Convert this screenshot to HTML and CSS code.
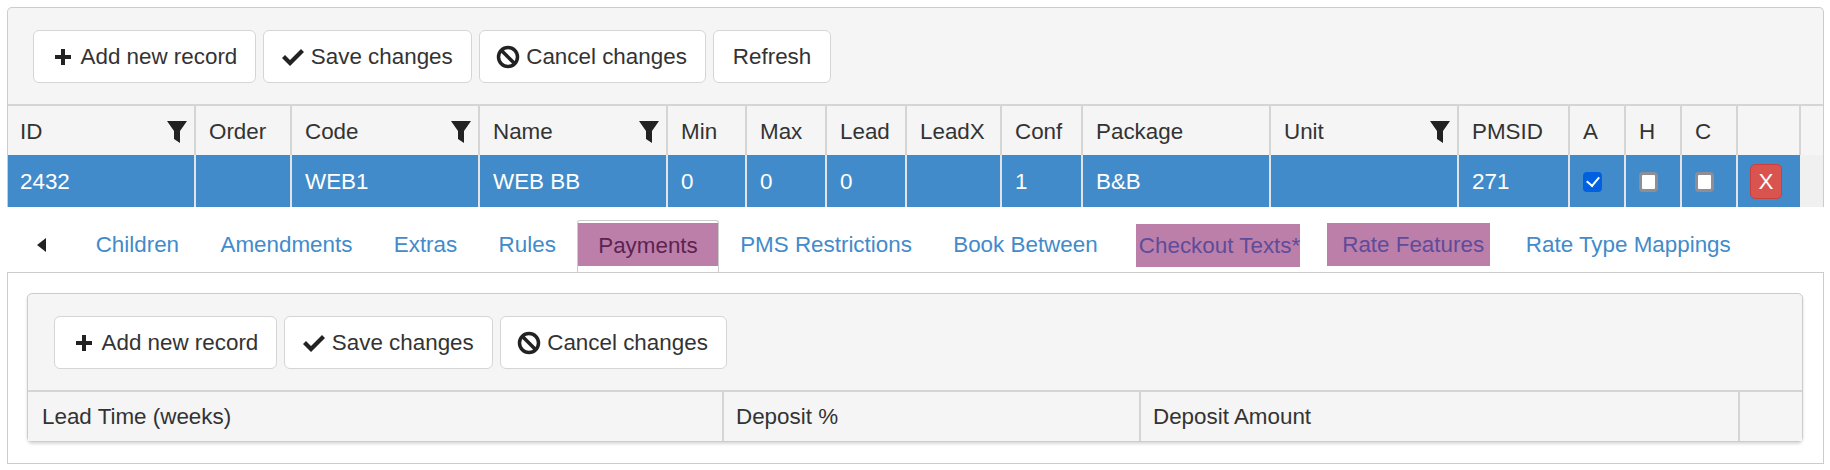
FILE: index.html
```html
<!DOCTYPE html>
<html lang="en">
<head>
  <meta charset="UTF-8" />
  <title>Rate Types</title>
  <link rel="stylesheet" href="styles.css">
</head>
<body>
  <div class="grid grid-main">
    <div class="toolbar">
      <button class="btn" type="button"><svg class="icon" viewBox="0 0 24 24"><path d="M10 4h4v6h6v4h-6v6h-4v-6H4v-4h6z"/></svg>Add new record</button>
      <button class="btn" type="button"><svg class="icon" viewBox="0 0 24 24"><path d="M1 13l3-3 5 5L20 4l3 3L9 21z"/></svg>Save changes</button>
      <button class="btn" type="button"><svg class="icon" viewBox="0 0 24 24"><circle class="ring" cx="12" cy="12" r="9.500"/><path class="slash" d="M5.500 5.500l13 13"/></svg>Cancel changes</button>
      <button class="btn btn-plain" type="button">Refresh</button>
    </div>
    <table class="rows">
      <colgroup>
        <col class="c-187"><col class="c-96"><col class="c-188"><col class="c-188">
        <col class="c-79"><col class="c-80"><col class="c-80"><col class="c-95"><col class="c-81">
        <col class="c-188"><col class="c-188"><col class="c-111"><col class="c-56"><col class="c-56"><col class="c-56"><col class="c-63"><col>
      </colgroup>
      <thead>
        <tr>
          <th class="has-filter">ID<svg class="funnel" viewBox="0 0 20 22"><path d="M0 0h20L13 10v12l-6-4V10z"/></svg></th>
          <th>Order</th>
          <th class="has-filter">Code<svg class="funnel" viewBox="0 0 20 22"><path d="M0 0h20L13 10v12l-6-4V10z"/></svg></th>
          <th class="has-filter">Name<svg class="funnel" viewBox="0 0 20 22"><path d="M0 0h20L13 10v12l-6-4V10z"/></svg></th>
          <th>Min</th>
          <th>Max</th>
          <th>Lead</th>
          <th>LeadX</th>
          <th>Conf</th>
          <th>Package</th>
          <th class="has-filter">Unit<svg class="funnel" viewBox="0 0 20 22"><path d="M0 0h20L13 10v12l-6-4V10z"/></svg></th>
          <th>PMSID</th>
          <th>A</th>
          <th>H</th>
          <th>C</th>
          <th></th>
          <th class="gutter"></th>
        </tr>
      </thead>
      <tbody>
        <tr class="selected">
          <td>2432</td>
          <td></td>
          <td>WEB1</td>
          <td>WEB BB</td>
          <td>0</td>
          <td>0</td>
          <td>0</td>
          <td></td>
          <td>1</td>
          <td>B&amp;B</td>
          <td></td>
          <td>271</td>
          <td><input type="checkbox" checked /></td>
          <td><input type="checkbox" /></td>
          <td><input type="checkbox" /></td>
          <td><button class="btn-delete" type="button">X</button></td>
          <td class="gutter"></td>
        </tr>
      </tbody>
    </table>
  </div>

  <div class="tabstrip">
    <ul class="tabs">
      <li class="tab-prev"><svg class="arrow" viewBox="0 0 10 14"><path d="M9 0v14L0 7z"/></svg></li>
      <li class="tab"><a href="#">Children</a></li>
      <li class="tab"><a href="#">Amendments</a></li>
      <li class="tab"><a href="#">Extras</a></li>
      <li class="tab"><a href="#">Rules</a></li>
      <li class="tab active"><a href="#">Payments</a></li>
      <li class="tab"><a href="#">PMS Restrictions</a></li>
      <li class="tab"><a href="#">Book Between</a></li>
      <li class="tab"><a class="mark mark-checkout" href="#">Checkout Texts*</a></li>
      <li class="tab"><a class="mark mark-features" href="#">Rate Features</a></li>
      <li class="tab"><a href="#">Rate Type Mappings</a></li>
    </ul>
    <div class="tab-content">
      <div class="grid grid-inner">
        <div class="toolbar">
          <button class="btn" type="button"><svg class="icon" viewBox="0 0 24 24"><path d="M10 4h4v6h6v4h-6v6h-4v-6H4v-4h6z"/></svg>Add new record</button>
          <button class="btn" type="button"><svg class="icon" viewBox="0 0 24 24"><path d="M1 13l3-3 5 5L20 4l3 3L9 21z"/></svg>Save changes</button>
          <button class="btn" type="button"><svg class="icon" viewBox="0 0 24 24"><circle class="ring" cx="12" cy="12" r="9.500"/><path class="slash" d="M5.500 5.500l13 13"/></svg>Cancel changes</button>
        </div>
        <table class="rows">
          <colgroup>
            <col class="c-lead"><col class="c-deposit"><col class="c-amount"><col>
          </colgroup>
          <thead>
            <tr>
              <th>Lead Time (weeks)</th>
              <th>Deposit %</th>
              <th>Deposit Amount</th>
              <th></th>
            </tr>
          </thead>
        </table>
      </div>
    </div>
  </div>
</body>
</html>
```

FILE: styles.css
```css
* {
  box-sizing: border-box;
}
body {
  margin: 0;
  padding: 7px 6px 0 7px;
  background: #fff;
  color: #333;
  font-family: "Liberation Sans", Arial, sans-serif;
  font-size: 22.400px;
}
.grid {
  border: 1px solid #ccc;
  background: #f5f5f5;
}
.grid-main {
  border-bottom: none;
  border-radius: 5px 5px 0 0;
  height: 200px;
  overflow: hidden;
}
.grid-main th {
  padding-top: 2px;
}
.grid-main th:first-child, .grid-main td:first-child {
  padding-left: 12px;
}
.grid-inner {
  height: 149px;
  border-radius: 5px;
  box-shadow: 0 2px 3px rgba(0, 0, 0, 0.15);
}
.grid-inner .toolbar {
  padding-left: 26px;
}
.grid-inner th {
  padding-left: 12px;
}
.grid-inner th:first-child {
  padding-left: 14px;
}
.toolbar {
  display: flex;
  gap: 7px;
  height: 98px;
  padding: 22px 25px;
  border-bottom: 2px solid #d5d5d5;
}
.btn {
  display: flex;
  align-items: center;
  height: 53px;
  padding: 0 18px 0 16.500px;
  background: #fff;
  border: 1px solid #d5d5d5;
  border-radius: 6px;
  color: #333;
  font: inherit;
}
.btn-plain {
  padding: 0 19px;
}
.icon {
  width: 24px;
  height: 24px;
  margin-right: 6px;
  fill: #222;
}
.ring, .slash {
  fill: none;
  stroke: #222;
  stroke-width: 3.500;
}
.rows {
  width: 100%;
  border-collapse: collapse;
  table-layout: fixed;
}
.c-187 { width: 187px; }
.c-188 { width: 188px; }
.c-96 { width: 96px; }
.c-79 { width: 79px; }
.c-80 { width: 80px; }
.c-95 { width: 95px; }
.c-81 { width: 81px; }
.c-111 { width: 111px; }
.c-56 { width: 56px; }
.c-63 { width: 63px; }
.c-lead { width: 695px; }
.c-deposit { width: 417px; }
.c-amount { width: 599px; }
th, td {
  padding: 0 13px;
  text-align: left;
  font-weight: normal;
  border-left: 2px solid #d5d5d5;
}
th:first-child, td:first-child {
  border-left: none;
}
th {
  position: relative;
  height: 49px;
  background: #f5f5f5;
}
td {
  height: 53px;
  background: #428bca;
  color: #fff;
  border-left-color: #e3e3e3;
}
td.gutter {
  background: #f0f0f0;
  border-left: none;
}
th.gutter {
  border-left: 2px solid #d5d5d5;
}
.funnel {
  position: absolute;
  top: 15px;
  right: 7px;
  width: 20px;
  height: 22px;
  fill: #222;
}
td input {
  position: relative;
  display: block;
  width: 19px;
  height: 20px;
  margin: 0;
  appearance: none;
  background: #fff;
  border: 3px solid #8e8e94;
  border-radius: 4px;
}
td input:checked {
  background: #0060df;
  border-color: #0060df;
}
td input:checked::after {
  content: "";
  position: absolute;
  top: -1px;
  left: 3px;
  width: 6px;
  height: 10px;
  border: solid #fff;
  border-width: 0 2.500px 2.500px 0;
  transform: rotate(40deg);
}
.btn-delete {
  display: block;
  width: 32px;
  height: 35px;
  margin-left: -1px;
  padding: 0;
  background: #d9534f;
  border: 1px solid #c9403c;
  border-radius: 5px;
  color: #fff;
  font: inherit;
}
.tabs {
  display: flex;
  align-items: flex-start;
  height: 65px;
  margin: 0;
  padding: 0;
  list-style: none;
}
.tab-prev {
  display: flex;
  align-items: center;
  height: 48px;
  width: 68px;
  padding-left: 30px;
  margin-top: 14px;
}
.arrow {
  width: 10px;
  height: 14px;
  fill: #222;
}
.tab {
  margin-top: 16px;
}
.tab a {
  display: block;
  height: 43px;
  padding: 0 20.700px;
  line-height: 44px;
  color: #428bca;
  text-decoration: none;
}
.tab.active {
  position: relative;
  z-index: 1;
  height: 52px;
  margin-top: 13px;
  background: #fff;
  border: 1px solid #ccc;
  border-bottom: none;
  border-radius: 3px 3px 0 0;
}
.tab.active a {
  margin-top: 2px;
  line-height: 45px;
  background: #bc7fa9;
  color: #5c2352;
}
.mark {
  background: #bc7fa9;
}
.tab a.mark-checkout {
  color: #5e4c9b;
  margin: 1px 0 0 17.500px;
  padding: 0 0 0 3px;
}
.tab a.mark-features {
  color: #5e4c9b;
  margin: 0 15px 0 27px;
  padding: 0 6px 0 15px;
}
.tab-content {
  height: 192px;
  padding: 20px 20px 0 19px;
  border: 1px solid #ccc;
}
```
